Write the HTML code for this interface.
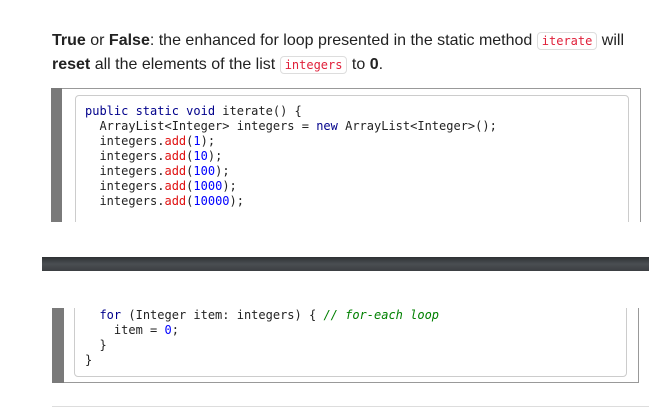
<!DOCTYPE html>
<html><head><meta charset="utf-8"><style>
body{margin:0;width:649px;height:409px;background:#fff;position:relative;overflow:hidden;font-family:"Liberation Sans",sans-serif;}
.p{position:absolute;left:52px;font-size:16px;color:#222;white-space:nowrap;}
.c{font-family:"DejaVu Sans Mono",monospace;font-size:12px;color:#e0203a;border:1px solid #ddd;border-radius:4px;padding:1px 4px;background:#fff;}
.frame{position:absolute;background:#fff;border:1px solid #999;box-sizing:border-box;}
.bar{position:absolute;background:#7a7a7a;}
.inner{position:absolute;border:1px solid #ccc;border-radius:4px;box-sizing:border-box;background:#fff;}
pre{position:absolute;margin:0;font-family:"DejaVu Sans Mono",monospace;font-size:12px;line-height:15px;color:#222;}
.k{color:#00008b}.r{color:#e01010}.n{color:#0000ff}.g{color:#008000;font-style:italic}
</style></head><body>
<div class="p" style="top:32px"><b>True</b> or <b>False</b>: the enhanced for loop presented in the static method <span class="c">iterate</span> will</div>
<div class="p" style="top:56px"><b>reset</b> all the elements of the list <span class="c">integers</span> to <b>0</b>.</div>

<div class="frame" style="left:51px;top:88px;width:590px;height:140px;border-bottom:none"></div>
<div class="bar" style="left:51px;top:88px;width:11px;height:134px"></div>
<div class="inner" style="left:75px;top:95px;width:554px;height:140px"></div>
<div style="position:absolute;left:40px;top:222px;width:609px;height:20px;background:#fff"></div>
<pre style="left:85px;top:104px"><span class="k">public static void</span> iterate() {
  ArrayList&lt;Integer&gt; integers = <span class="k">new</span> ArrayList&lt;Integer&gt;();
  integers.<span class="r">add</span>(<span class="n">1</span>);
  integers.<span class="r">add</span>(<span class="n">10</span>);
  integers.<span class="r">add</span>(<span class="n">100</span>);
  integers.<span class="r">add</span>(<span class="n">1000</span>);
  integers.<span class="r">add</span>(<span class="n">10000</span>);</pre>

<div style="position:absolute;left:42px;top:257px;width:607px;height:14px;background:linear-gradient(#2e3134,#4a4e52 50%,#3c3f42)"></div>

<div class="frame" style="left:52px;top:300px;width:587px;height:83px;border-top:none"></div>
<div class="bar" style="left:52px;top:308px;width:12px;height:75px"></div>
<div class="inner" style="left:74px;top:290px;width:553px;height:87px"></div>
<div style="position:absolute;left:40px;top:280px;width:609px;height:28px;background:#fff"></div>
<pre style="left:85px;top:308px">  <span class="k">for</span> (Integer item: integers) { <span class="g">// for-each loop</span>
    item = <span class="n">0</span>;
  }
}</pre>

<div style="position:absolute;left:52px;top:406px;width:597px;height:1px;background:#ddd"></div>
</body></html>
